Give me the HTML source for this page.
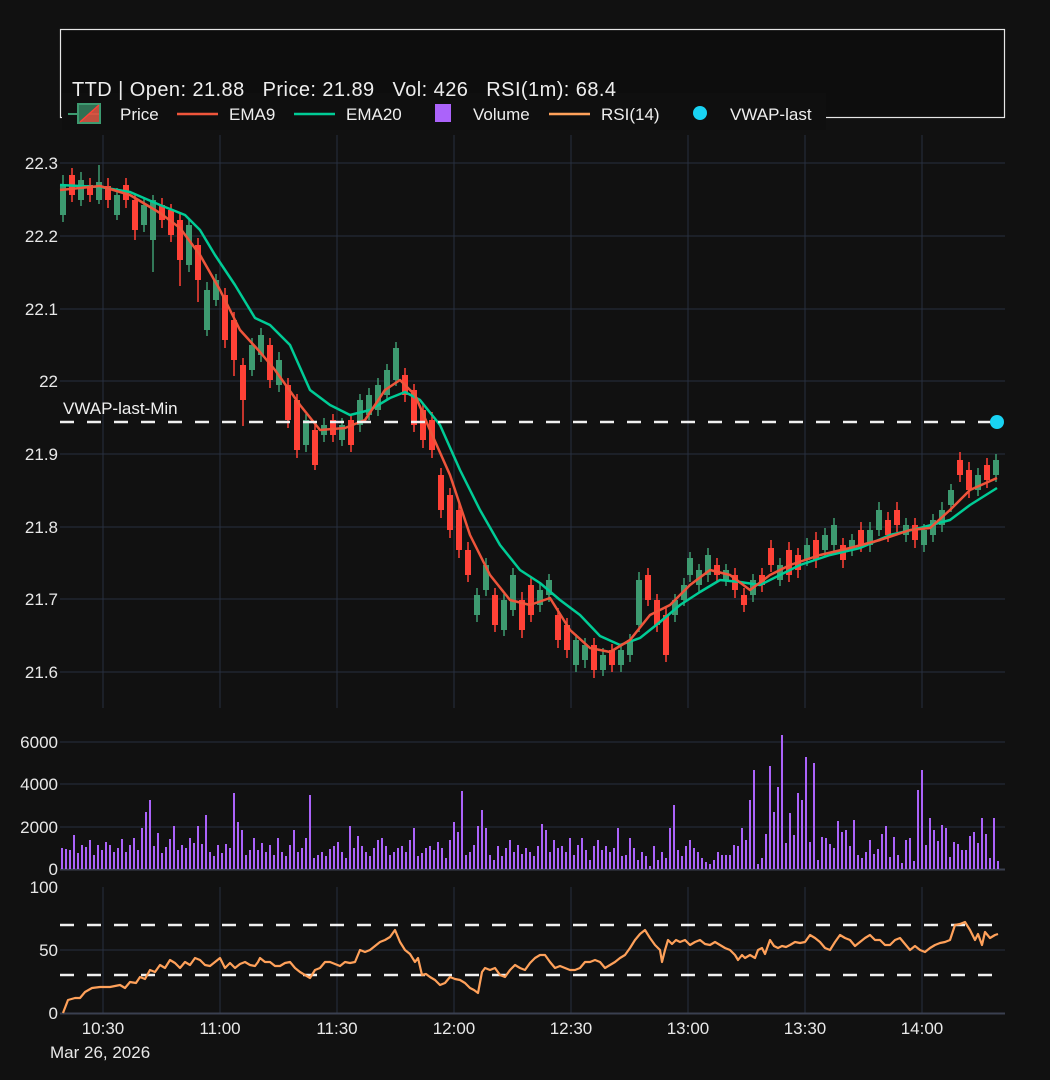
<!DOCTYPE html>
<html><head><meta charset="utf-8"><style>
html,body{margin:0;padding:0;background:#111111;}
svg{display:block;font-family:"Liberation Sans",sans-serif;}
</style></head><body>
<svg width="1050" height="1080" viewBox="0 0 1050 1080" xmlns="http://www.w3.org/2000/svg">
<rect width="1050" height="1080" fill="#111111"/>
<rect x="60.5" y="29.5" width="944" height="88" fill="#0d0d0d" stroke="#e6e6e6" stroke-width="1.2"/>
<g stroke="#283040" stroke-width="1">
<path d="M60 163H1005M60 236H1005M60 309H1005M60 381H1005M60 454H1005M60 527H1005M60 599H1005M60 672H1005"/>
<path d="M103 135V708M220 135V708M337 135V708M454 135V708M571 135V708M688 135V708M805 135V708M922 135V708"/>
<path d="M60 742H1005M60 784H1005M60 827H1005"/>
<path d="M60 950H1005M103 887V1013M220 887V1013M337 887V1013M454 887V1013M571 887V1013M688 887V1013M805 887V1013M922 887V1013"/>
</g>
<path d="M60 869.5H1005M60 1013.5H1005" stroke="#3a4050" stroke-width="2"/>
<g fill="#e8e8e8" font-size="17" text-anchor="end">
<text x="58" y="169">22.3</text><text x="58" y="242">22.2</text><text x="58" y="315">22.1</text><text x="58" y="387">22</text>
<text x="58" y="460">21.9</text><text x="58" y="533">21.8</text><text x="58" y="605">21.7</text><text x="58" y="678">21.6</text>
<text x="58" y="748">6000</text><text x="58" y="790">4000</text><text x="58" y="833">2000</text><text x="58" y="875">0</text>
<text x="58" y="893">100</text><text x="58" y="956">50</text><text x="58" y="1019">0</text>
</g>
<g fill="#e8e8e8" font-size="17" text-anchor="middle">
<text x="103" y="1034">10:30</text><text x="220" y="1034">11:00</text><text x="337" y="1034">11:30</text><text x="454" y="1034">12:00</text>
<text x="571" y="1034">12:30</text><text x="688" y="1034">13:00</text><text x="805" y="1034">13:30</text><text x="922" y="1034">14:00</text>
</g>
<text x="50" y="1058" fill="#e8e8e8" font-size="17">Mar 26, 2026</text>
<g stroke="#3d9a70">
<path stroke-width="1.5" d="M63 175V222M81 172V206M99 165V204M117 188V220M144 198V232M153 195V272M189 218V272M207 282V336M216 274V306M252 338V376M261 328V362M279 352V392M306 414V452M324 418V442M342 418V446M360 394V432M369 388V420M378 378V416M387 364V400M396 342V386M477 588V622M486 558V596M504 594V636M513 568V616M540 583V612M549 574V602M576 634V672M585 638V668M603 648V676M621 644V672M630 634V662M639 572V632M675 594V622M684 578V606M690 552V582M699 564V592M708 548V582M726 564V586M753 574V602M780 558V586M807 538V566M825 528V556M834 518V552M852 534V556M870 522V552M879 502V536M906 518V542M924 524V552M933 514V542M942 502V532M951 484V512M978 468V496M996 454V482"/>
<path stroke-width="6" d="M63 185V215M81 180V200M99 182V200M117 195V215M144 205V225M153 200V240M189 225V265M207 290V330M216 280V300M252 345V370M261 335V355M279 360V385M306 420V445M324 425V435M342 425V440M360 400V425M369 395V415M378 385V410M387 370V395M396 348V380M477 595V615M486 565V590M504 600V630M513 575V610M540 590V605M549 580V595M576 640V665M585 645V660M603 655V670M621 650V665M630 640V655M639 580V625M675 600V615M684 585V600M690 558V575M699 570V585M708 555V575M726 570V580M753 580V595M780 565V580M807 545V560M825 535V550M834 525V545M852 540V550M870 530V545M879 510V530M906 525V535M924 530V545M933 520V535M942 510V525M951 490V505M978 475V490M996 460V475"/>
</g>
<g stroke="#ff4136">
<path stroke-width="1.5" d="M72 168V202M90 178V202M108 178V208M126 178V208M135 194V240M162 198V228M171 204V242M180 214V286M198 238V302M225 288V348M234 312V376M243 358V426M270 338V388M288 378V428M297 394V458M315 424V470M333 414V442M351 414V452M405 368V402M414 384V432M423 404V448M432 412V458M441 468V518M450 488V538M459 502V558M468 542V582M495 588V632M522 592V638M531 578V622M558 608V648M567 618V658M594 638V678M612 644V672M648 568V606M657 594V632M666 608V662M717 558V582M735 568V598M744 588V612M762 568V592M771 540V572M789 542V582M798 548V578M816 532V568M843 538V568M861 522V552M888 512V542M897 502V532M915 518V548M960 452V482M969 462V498M987 458V488"/>
<path stroke-width="6" d="M72 175V195M90 185V195M108 186V200M126 185V200M135 200V230M162 205V220M171 210V235M180 220V260M198 245V280M225 295V340M234 320V360M243 365V400M270 345V380M288 385V420M297 400V450M315 430V465M333 420V435M351 420V445M405 375V395M414 390V425M423 410V440M432 420V450M441 475V510M450 495V530M459 510V550M468 550V575M495 595V625M522 600V630M531 585V615M558 615V640M567 625V650M594 645V670M612 650V665M648 575V600M657 600V625M666 615V655M717 565V575M735 575V590M744 595V605M762 575V585M771 548V565M789 550V575M798 555V570M816 540V560M843 545V560M861 530V545M888 520V535M897 510V525M915 525V540M960 460V475M969 470V490M987 465V480"/>
</g>
<polyline fill="none" stroke="#00cc96" stroke-width="2.5" stroke-linejoin="round" points="60,185 100,187 130,192 160,205 185,215 200,230 215,255 235,285 255,318 270,325 290,345 310,390 330,405 350,415 370,410 390,398 405,392 420,400 440,425 460,470 480,510 500,545 520,570 540,583 560,600 580,615 600,636 620,645 640,638 660,622 680,605 700,592 720,580 740,582 760,585 780,575 800,565 830,555 860,548 890,535 920,528 950,520 970,505 997,488"/>
<polyline fill="none" stroke="#ef553b" stroke-width="2.5" stroke-linejoin="round" points="60,190 100,186 130,195 160,213 180,228 200,255 220,290 240,330 260,352 275,370 300,405 320,430 345,428 365,420 385,390 400,380 415,395 430,430 450,475 470,535 490,575 510,600 530,605 550,598 570,630 590,648 610,652 630,640 650,615 670,605 690,585 710,570 730,575 750,590 770,575 790,565 820,555 850,548 880,540 910,530 930,528 950,510 970,490 997,478"/>
<path d="M60 422H1005" stroke="#f0f0f0" stroke-width="2.5" stroke-dasharray="14 13"/>
<text x="63" y="414" fill="#f0f0f0" font-size="17">VWAP-last-Min</text>
<circle cx="997" cy="422" r="7" fill="#19d3f3"/>
<path stroke="#ab63fa" stroke-width="2" fill="none" d="M62 869V848M66 869V849M70 869V850M74 869V835M78 869V853M82 869V845M86 869V847M90 869V840M94 869V855M98 869V845M102 869V850M106 869V842M110 869V845M114 869V852M118 869V848M122 869V839M126 869V852M130 869V845M134 869V838M138 869V850M142 869V828M146 869V812M150 869V800M154 869V846M158 869V833M162 869V853M166 869V847M170 869V839M174 869V826M178 869V850M182 869V845M186 869V848M190 869V838M194 869V843M198 869V826M202 869V844M206 869V815M210 869V852M214 869V856M218 869V845M222 869V853M226 869V844M230 869V848M234 869V793M238 869V822M242 869V830M246 869V855M250 869V850M254 869V838M258 869V850M262 869V843M266 869V852M270 869V845M274 869V855M278 869V838M282 869V852M286 869V856M290 869V845M294 869V830M298 869V852M302 869V848M306 869V838M310 869V795M314 869V858M318 869V855M322 869V852M326 869V856M330 869V849M334 869V846M338 869V842M342 869V852M346 869V858M350 869V826M354 869V848M358 869V836M362 869V846M366 869V852M370 869V856M374 869V848M378 869V840M382 869V838M386 869V846M390 869V855M394 869V852M398 869V848M402 869V846M406 869V852M410 869V840M414 869V828M418 869V856M422 869V853M426 869V848M430 869V846M434 869V850M438 869V842M442 869V848M446 869V858M450 869V840M454 869V822M458 869V832M462 869V791M466 869V855M470 869V852M474 869V845M478 869V826M482 869V810M486 869V828M490 869V855M494 869V860M498 869V846M502 869V856M506 869V848M510 869V840M514 869V852M518 869V845M522 869V854M526 869V848M530 869V852M534 869V856M538 869V846M542 869V824M546 869V830M550 869V852M554 869V840M558 869V848M562 869V846M566 869V852M570 869V838M574 869V855M578 869V845M582 869V838M586 869V850M590 869V860M594 869V846M598 869V840M602 869V850M606 869V846M610 869V852M614 869V848M618 869V828M622 869V856M626 869V855M630 869V838M634 869V848M638 869V860M642 869V852M646 869V856M650 869V866M654 869V846M658 869V860M662 869V852M666 869V858M670 869V828M674 869V805M678 869V850M682 869V856M686 869V846M690 869V840M694 869V848M698 869V852M702 869V858M706 869V862M710 869V864M714 869V860M718 869V852M722 869V855M726 869V855M730 869V855M734 869V845M738 869V846M742 869V828M746 869V840M750 869V800M754 869V770M758 869V864M762 869V858M766 869V834M770 869V766M774 869V812M778 869V787M782 869V735M786 869V843M790 869V813M794 869V835M798 869V793M802 869V800M806 869V757M810 869V842M814 869V763M818 869V860M822 869V837M826 869V838M830 869V844M834 869V848M838 869V821M842 869V832M846 869V830M850 869V846M854 869V820M858 869V855M862 869V858M866 869V852M870 869V840M874 869V854M878 869V849M882 869V834M886 869V826M890 869V857M894 869V837M898 869V855M902 869V863M906 869V840M910 869V838M914 869V861M918 869V790M922 869V770M926 869V845M930 869V818M934 869V830M938 869V841M942 869V825M946 869V828M950 869V857M954 869V842M958 869V844M962 869V850M966 869V850M970 869V836M974 869V832M978 869V843M982 869V818M986 869V834M990 869V858M994 869V818M998 869V861"/>
<g stroke="#f0f0f0" stroke-width="2.5" stroke-dasharray="14 13">
<path d="M60 925H1005M60 975H1005"/>
</g>
<polyline fill="none" stroke="#ffa15a" stroke-width="2.2" stroke-linejoin="round" points="63,1013 68,1000 75,998 80,998 85,992 92,988 100,987 110,987 120,985 125,988 130,982 136,983 140,977 145,979 150,970 155,972 160,965 165,968 170,960 175,963 180,968 185,962 190,965 195,958 200,960 205,965 210,966 215,962 220,958 225,968 230,963 235,968 240,964 245,962 250,965 255,966 258,962 260,958 265,962 270,962 275,966 280,966 285,963 290,962 295,968 300,972 305,975 310,978 315,970 320,968 325,962 330,962 335,964 340,966 345,962 350,963 355,962 360,950 365,952 370,950 375,946 380,942 385,940 390,937 395,930 400,942 405,950 410,954 415,962 418,958 422,975 426,974 430,977 435,980 440,985 445,983 450,977 455,979 460,980 465,983 470,988 474,990 478,993 482,972 485,968 490,970 495,968 500,975 505,977 510,970 515,965 520,968 525,970 530,963 535,958 540,955 545,955 550,962 555,968 560,966 565,968 570,970 575,970 580,968 585,962 590,962 595,960 600,962 605,968 610,965 615,962 620,958 625,955 630,948 635,940 640,934 645,930 650,938 655,945 660,950 662,962 665,950 668,940 672,944 676,940 680,942 685,940 690,945 695,942 700,940 705,944 710,945 715,942 720,945 725,948 730,950 735,955 738,960 742,955 745,958 750,955 755,958 758,950 762,948 765,954 770,940 774,946 778,948 782,946 786,947 790,945 795,942 800,943 805,942 810,935 815,938 820,942 825,948 830,950 835,942 840,935 845,938 850,940 855,946 860,942 865,938 870,935 875,940 880,940 885,945 890,945 895,940 900,938 905,944 910,950 915,946 920,950 925,952 930,948 935,945 940,943 945,942 950,940 955,925 960,924 965,922 970,930 975,940 978,934 982,945 985,932 990,938 995,935 998,934"/>
<rect x="62" y="93" width="764" height="37" fill="#0f0f0f"/>
<text x="72" y="96" fill="#eeeeee" font-size="20" textLength="544" lengthAdjust="spacing">TTD | Open: 21.88&#160;&#160; Price: 21.89&#160;&#160; Vol: 426&#160;&#160; RSI(1m): 68.4</text>
<g font-size="17" fill="#eeeeee">
<path d="M68 114H79" stroke="#3d9a70" stroke-width="2"/><path d="M89 114H100" stroke="#ff4136" stroke-width="2"/>
<rect x="78" y="104" width="22" height="19" fill="#3d9a70" fill-opacity="0.7" stroke="#3d9a70" stroke-width="2"/>
<path d="M80 122L99 105V122Z" fill="#ff4136" fill-opacity="0.7"/>
<path d="M80 122L99 105" stroke="#ff4136" stroke-width="1.5"/>
<text x="120" y="120">Price</text>
<path d="M177 114H218" stroke="#ef553b" stroke-width="2.5"/><text x="229" y="120">EMA9</text>
<path d="M294 114H335" stroke="#00cc96" stroke-width="2.5"/><text x="346" y="120">EMA20</text>
<rect x="435" y="104" width="16" height="18" fill="#ab63fa"/><text x="473" y="120">Volume</text>
<path d="M549 114H590" stroke="#ffa15a" stroke-width="2.5"/><text x="601" y="120">RSI(14)</text>
<circle cx="700" cy="113" r="7" fill="#19d3f3"/><text x="730" y="120">VWAP-last</text>
</g>
</svg>
</body></html>
